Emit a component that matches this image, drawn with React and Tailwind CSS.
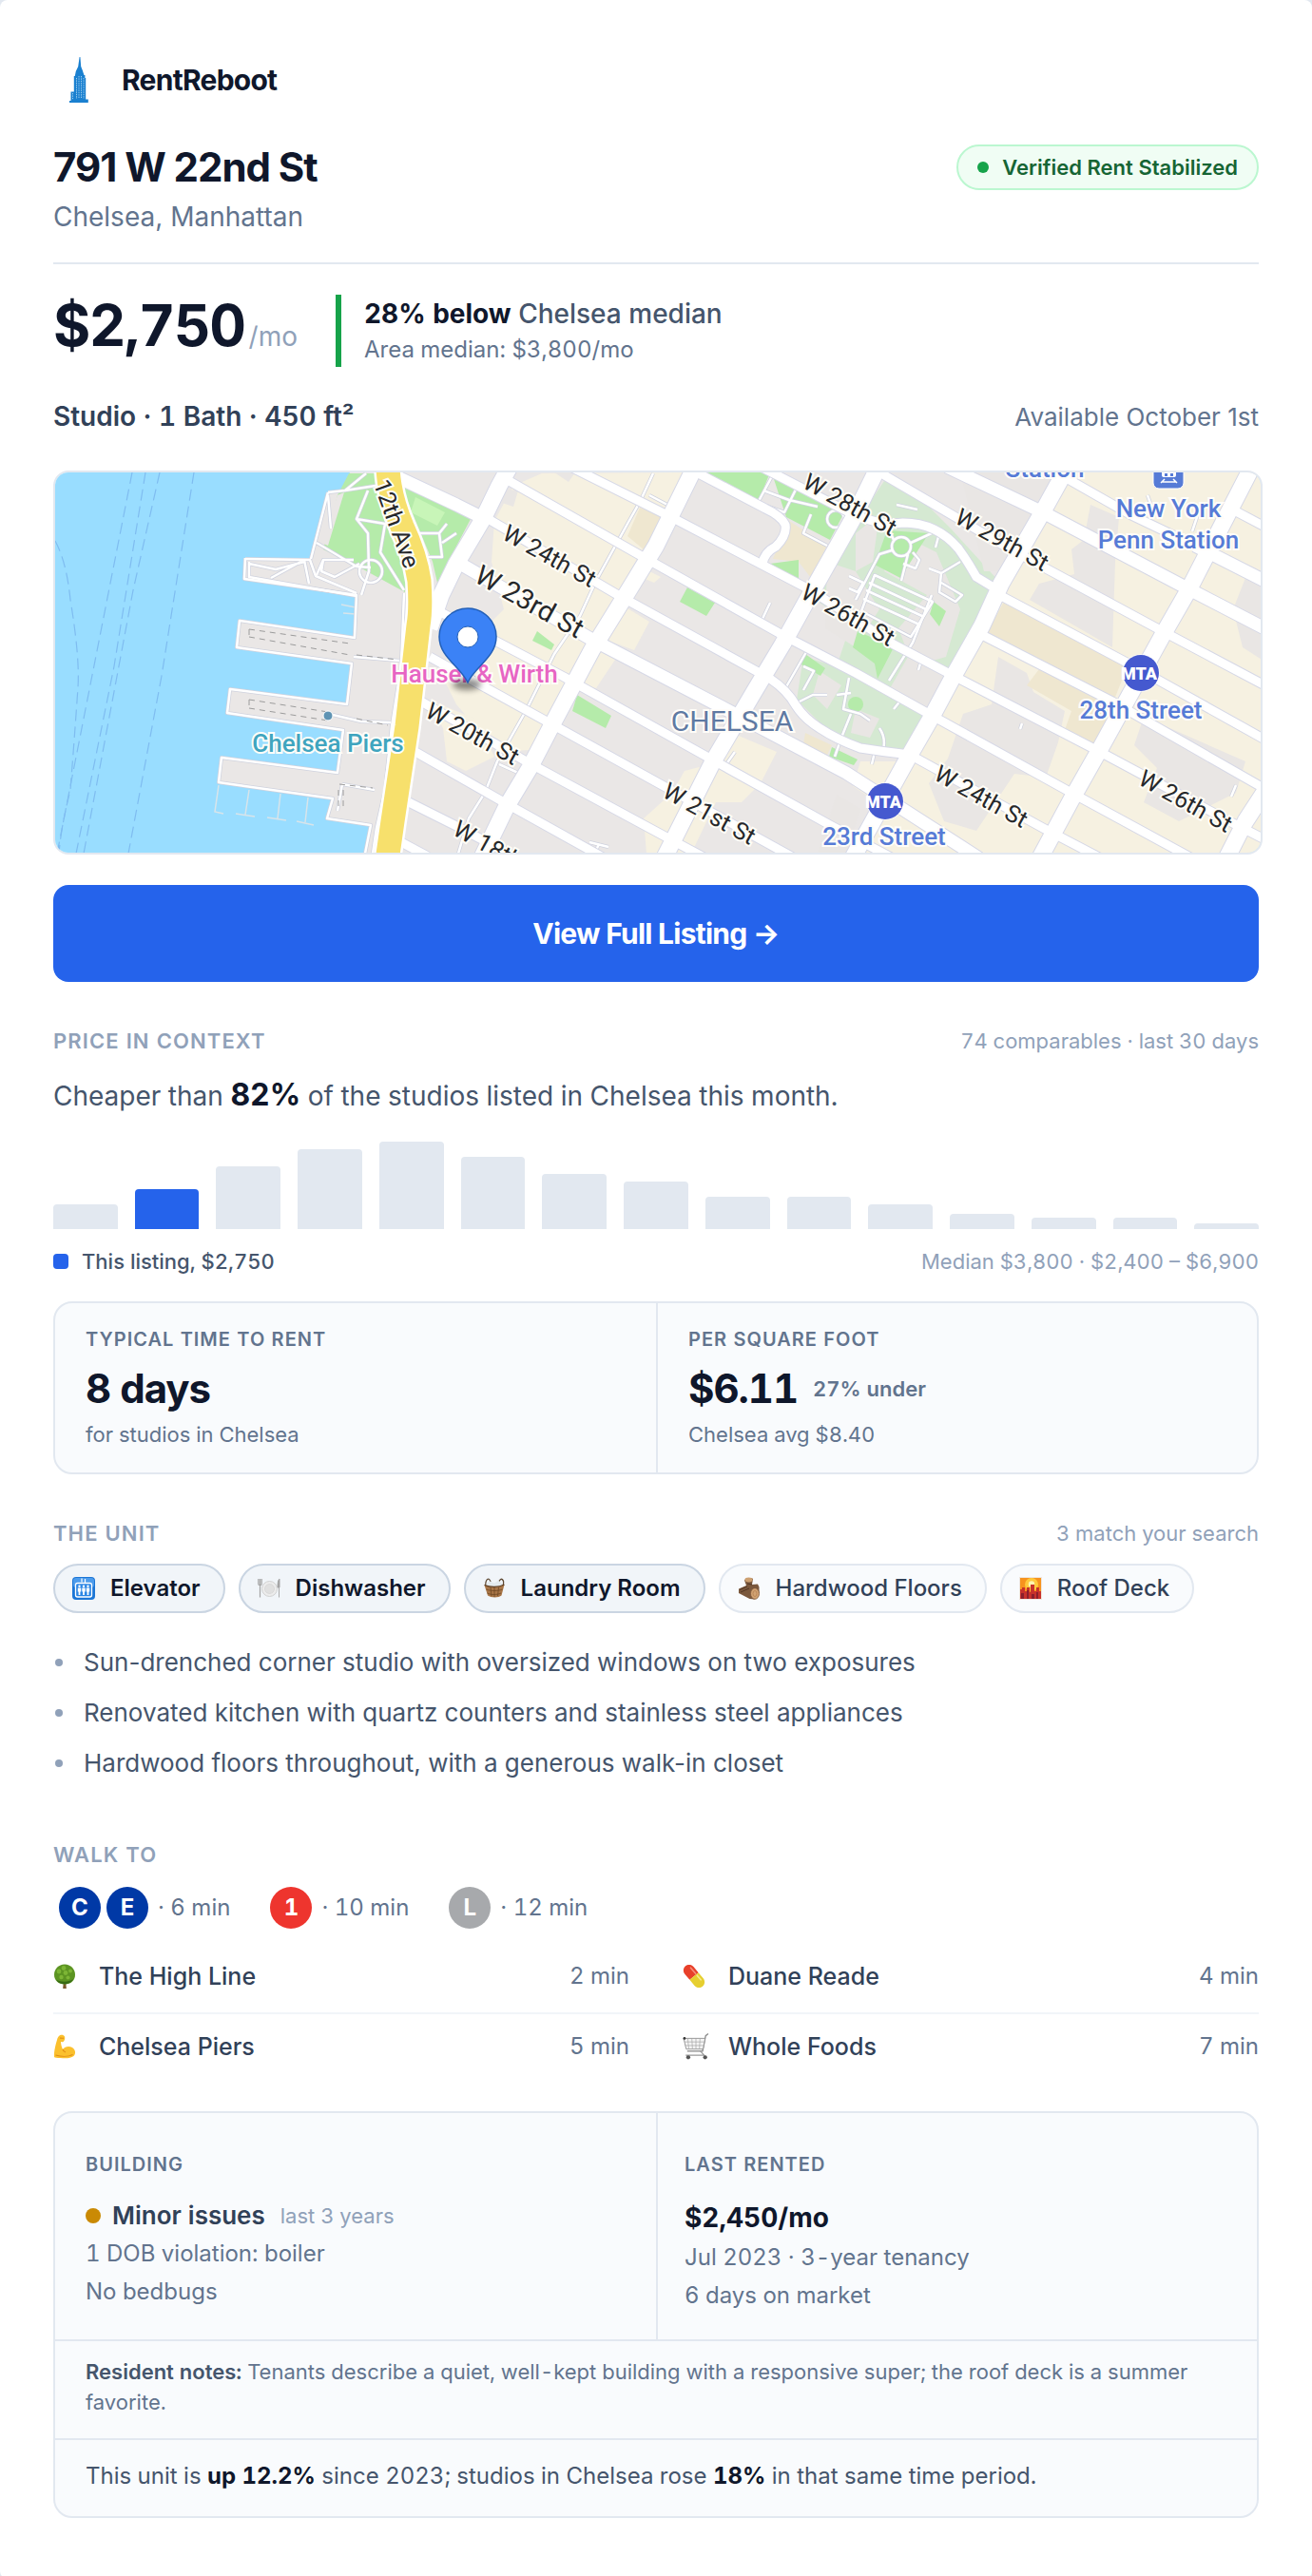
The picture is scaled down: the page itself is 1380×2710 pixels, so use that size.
import React from "react";

// Price histogram, bar heights in px
const bars = [26, 42, 66, 84, 92, 76, 58, 50, 34, 34, 26, 16, 12, 12, 6];
const listingBar = 1;

const amenities = [
    { label: "Elevator", icon: ElevatorIcon, match: true },
    { label: "Dishwasher", icon: PlateIcon, match: true },
    { label: "Laundry Room", icon: BasketIcon, match: true },
    { label: "Hardwood Floors", icon: WoodIcon, match: false },
    { label: "Roof Deck", icon: SunsetIcon, match: false },
];

const highlights = [
    "Sun-drenched corner studio with oversized windows on two exposures",
    "Renovated kitchen with quartz counters and stainless steel appliances",
    "Hardwood floors throughout, with a generous walk-in closet",
];

const trains = [
    { lines: ["C", "E"], color: "bg-[#0039a6]", time: "6 min" },
    { lines: ["1"], color: "bg-[#ee352e]", time: "10 min" },
    { lines: ["L"], color: "bg-[#a7a9ac]", time: "12 min" },
];

const placeRows = [
    [
        { name: "The High Line", time: "2 min", icon: TreeIcon },
        { name: "Duane Reade", time: "4 min", icon: PillIcon },
    ],
    [
        { name: "Chelsea Piers", time: "5 min", icon: ArmIcon },
        { name: "Whole Foods", time: "7 min", icon: CartIcon },
    ],
];

function LogoIcon() {
    return (
        <svg viewBox="0 0 56 56" className="size-14 shrink-0" aria-hidden="true">
            <path
                fill="#1a80d0"
                d="M27.6 4h.8l.8 10 1.6 4 1.6 5h1v3h.8v22.5h2.6V52H17v-2h1.500V40.500h3.300V24h1l1-5 2.400-5z"
            />
            <path
                stroke="#d4ecfb"
                strokeWidth="0.700"
                strokeDasharray="1.400 1"
                fill="none"
                d="M24.500 26v22M27 24v24M29.500 24v24M32 26v22M20.500 42v7"
            />
        </svg>
    );
}

function ElevatorIcon() {
    return (
        <svg viewBox="0 0 24 24" className="size-6 shrink-0" aria-hidden="true">
            <rect width="24" height="24" rx="4" fill="#1c76d6" />
            <rect x="1" y="1" width="22" height="10" rx="3" fill="#4d9cec" />
            <path d="M10 1.500v4M13.500 2v4" stroke="#fff" strokeWidth="1.200" />
            <rect x="3.500" y="6.500" width="17" height="14.500" rx="2" fill="#2c86e4" stroke="#fff" strokeWidth="1.300" />
            {[7.5, 12, 16.500].map((x) => (
                <g key={x} fill="#fff">
                    <circle cx={x} cy="9.800" r="1.200" />
                    <path d={`M${x - 1.700} 11.500h3.400v4h-.8v3.500h-1.800v-3.500h-.8z`} />
                </g>
            ))}
        </svg>
    );
}

function PlateIcon() {
    return (
        <svg viewBox="0 0 24 24" className="size-6 shrink-0" aria-hidden="true">
            <circle cx="12.500" cy="12.500" r="8" fill="#ececec" stroke="#c9c9c9" strokeWidth="0.800" />
            <circle cx="12.500" cy="12.500" r="5" fill="#e0e0e0" stroke="#d0d0d0" strokeWidth="0.600" />
            <path d="M.8 2v5.500c0 1.500 3.400 1.500 3.400 0V2M2.500 2v19.500" stroke="#a3a3a3" strokeWidth="1.200" fill="none" />
            <path d="M23 2c-1.500 1-2 4-2 9h2zM22.500 11v10.500" fill="#a3a3a3" stroke="#a3a3a3" strokeWidth="0.900" />
        </svg>
    );
}

function BasketIcon() {
    return (
        <svg viewBox="0 0 24 24" className="size-6 shrink-0" aria-hidden="true">
            <path d="M3 10C2 3 6-1 8 5M21 9c2-6-2-10-5-3" fill="none" stroke="#5f4a35" strokeWidth="1.300" />
            <path d="M3 8l4-3.500 5 2 4-3 5 4.500-9 5z" fill="#e3eaee" />
            <path d="M1.500 8.500c6 2.500 15 2.500 21-.5l-3 11.500c-3 2.600-11 2.600-14.500 0z" fill="#a87547" />
            <path d="M1.500 8.500c6 2.500 15 2.500 21-.5" fill="none" stroke="#5d3c20" strokeWidth="1.300" />
            <path d="M3.500 13c5 2 12 2 17 0M4.500 17c4 2 10 2 14.500 0M8 11l1 9M12 11v10M16.500 11l-1 9" fill="none" stroke="#6d4824" strokeWidth="0.800" />
        </svg>
    );
}

function WoodIcon() {
    return (
        <svg viewBox="0 0 24 24" className="size-6 shrink-0" aria-hidden="true">
            <path d="M7 3.500C8 1 14 0 16 2l-1 6 6-.5 1.500 3V17l-5 6.500-5-.5-11.500-6L1 12.500 9 9z" fill="#7a583d" />
            <ellipse cx="11.500" cy="3" rx="4" ry="2.400" fill="#cda071" />
            <path d="M2 13.500l8-3.500M3 16l9-4M10 7l5 1" stroke="#523725" strokeWidth="1" />
            <ellipse cx="18" cy="17.500" rx="4.500" ry="5.800" fill="#d2a373" stroke="#7c5638" strokeWidth="0.800" />
            <ellipse cx="18" cy="17.500" rx="2" ry="3" fill="none" stroke="#b27f50" strokeWidth="0.800" />
        </svg>
    );
}

function SunsetIcon() {
    return (
        <svg viewBox="0 0 24 24" className="size-6 shrink-0" aria-hidden="true">
            <rect x="0.500" y="0.500" width="23" height="23" fill="#f7931e" stroke="#efe6dd" />
            <circle cx="13" cy="8" r="7" fill="#ffc93c" />
            <circle cx="13" cy="7.500" r="3.200" fill="#fff4b0" />
            <path d="M1 13h2v-2h3v4h2v-4h3v5h1V8h4v7h2v-4h3v4h2v8H1z" fill="#c8322b" />
            <path d="M2 17h3v6H2zM8 14h2v9H8zM13 18h3v5h-3zM18 16h2v7h-2z" fill="#8a1f2c" />
        </svg>
    );
}

function TreeIcon() {
    return (
        <svg viewBox="0 0 24 26" className="h-7 w-6 shrink-0" aria-hidden="true">
            <path d="M10.800 18h2.400l.6 8h-3.600z" fill="#7a5a2e" />
            <path d="M12 .5c6.500 0 11 5 11 11S18.500 21.500 12 21.500 1 17.500 1 11.500 5.500.5 12 .5z" fill="#5c9422" />
            <g fill="#7cb535">
                <circle cx="11" cy="4.500" r="2.400" />
                <circle cx="6" cy="8" r="2.400" />
                <circle cx="13" cy="9.500" r="2.400" />
                <circle cx="18" cy="7.500" r="2" />
                <circle cx="8.500" cy="14" r="2.200" />
                <circle cx="15.500" cy="14.500" r="2" />
            </g>
            <path d="M3 16.500c5 3 13 3 18-.5-3 6.500-14 7.500-18 .5z" fill="#376b15" />
        </svg>
    );
}

function PillIcon() {
    return (
        <svg viewBox="0 0 24 24" className="size-6 shrink-0" aria-hidden="true">
            <g transform="rotate(50 12 12)">
                <path d="M4 6h8v12H4a6 6 0 0 1 0-12z" fill="#e8402a" />
                <path d="M12 6h8a6 6 0 0 1 0 12h-8z" fill="#e6cf30" />
                <path d="M3 9h8" stroke="#f68e7c" strokeWidth="1.600" strokeLinecap="round" />
                <path d="M13.500 9h6" stroke="#f7ec8e" strokeWidth="1.600" strokeLinecap="round" />
            </g>
        </svg>
    );
}

function ArmIcon() {
    return (
        <svg viewBox="0 0 24 26" className="h-7 w-6 shrink-0" aria-hidden="true">
            <path
                d="M6 2c1.500-1.800 5-1.600 6 .5.800 2-.2 4.500-1.500 5.500-1.500.5-2 0-2.500 0 .2 3 .8 5.500 2 8 2-3 6.500-4 10-2 3.500 2.200 4 6.500 1.500 9-3 2.600-9 2.500-14 2-3.500-.2-6 0-6.500-1C.5 18 3 9 4 6c.4-1.600 1-3 2-4z"
                fill="#fbc02d"
            />
            <path d="M10 16c.5 1.500 1.500 2.500 3 3M2.500 22c5 1.500 13 2 18-.5M7 4c1.500.2 3 .5 4 0" fill="none" stroke="#e08e16" strokeWidth="1.200" />
        </svg>
    );
}

function CartIcon() {
    return (
        <svg viewBox="0 0 26 26" className="size-7 shrink-0" aria-hidden="true">
            <path d="M25 .5l-2.500 2-3 15H4.500" fill="none" stroke="#888" strokeWidth="1.200" />
            <path d="M1 5h21l-2 10.500H3.500z" fill="#f4f4f4" stroke="#8b8b8b" strokeWidth="0.800" />
            <path d="M5 5l1 10M9 5l.6 10M13 5v10M17 5l-.6 10M2 8.500h19M2.500 12h18" stroke="#a0a0a0" strokeWidth="0.600" />
            <path d="M17 17l4 4.500H3" fill="none" stroke="#9b9b9b" strokeWidth="1.200" />
            <circle cx="5.500" cy="23.500" r="2" fill="#555" />
            <circle cx="22" cy="23.500" r="2" fill="#555" />
            <circle cx="1.800" cy="5" r="1.300" fill="#333" />
        </svg>
    );
}

// Street name set along the street grid
function StreetLabel({ x, y, angle = 29, size = 25, children }) {
    return (
        <text
            transform={`translate(${x} ${y}) rotate(${angle})`}
            textAnchor="middle"
            dominantBaseline="central"
            fontSize={size}
            fill="#26282b"
            stroke="#fffdf6"
            strokeWidth="4"
            paintOrder="stroke"
        >
            {children}
        </text>
    );
}

function PlaceLabel({ x, y, color, size = 26, weight = 500, children }) {
    return (
        <text x={x} y={y} textAnchor="middle" fontSize={size} fontWeight={weight} fill={color} stroke="#fffdf9" strokeWidth="4" paintOrder="stroke">
            {children}
        </text>
    );
}

function MtaMarker({ x, y }) {
    return (
        <g transform={`translate(${x} ${y})`}>
            <circle r="20" fill="#fff" opacity="0.600" />
            <circle r="19" fill="#4559cf" />
            <text y="7" x="-2" textAnchor="middle" fontSize="18" fontWeight="900" fill="#fff">
                MTA
            </text>
        </g>
    );
}

const avenues = [
    "M536 490 525 510 508 545 480 592 464 625 452 660",
    "M731 490 690 573 657 627 623 682 583 757 557 807 533 847 505 905",
    "M924 490 897 545 853 623 823 677 793 727 750 800 699 901",
    "M1123 490 1097 537 1053 613 1033 657 1003 710 980 753 957 793 895 905",
    "M1317 490 1250 620 1223 667 1157 787 1127 840 1092 905",
    "M1334 826 1310 863 1287 908",
];

const streets = [
    "M532 503 673 583 823 667 900 707 977 750 1127 833 1254 902",
    "M600 490 706 543 853 620 940 677 1003 710 1157 790 1293 863 1334 884",
    "M510 543 650 625 810 713Q828 725 837 741 846 755 862 765 880 777 905 786 930 790 957 793L1097 870 1160 903",
    "M725 492 805 534Q822 542 826 551 828 562 816 574 804 580 802 592",
    "M800 490 897 540Q925 552 950 549 985 549 1008 576 1018 590 1027 606L1050 620",
    "M915 490 1063 577 1217 660 1334 722",
    "M1055 627 1187 697 1334 779",
    "M1033 667 1170 737 1334 831",
    "M1104 492 1190 541 1257 573",
    "M1300 537 1334 555",
    "M452 637 593 711 747 797 873 867 945 905",
    "M452 690 577 759 700 827 836 902",
    "M443 737 557 802 707 883 748 905",
    "M437 790 530 843 645 907",
    "M430 843 480 868 560 910",
    "M422 885 450 900",
];

const wideStreets = [
    "M416 500 480 530 510 545",
    "M477 588 623 672 767 747 890 812 1030 902",
    "M996 490 1097 538 1247 617 1334 662",
    "M1257 573 1334 612",
];

const creamBlocks = [
    "540,510 570,497 722,496 647,627 607,707 573,787 523,790 480,740 460,700 503,667 530,640 517,590 520,547",
    "450,735 500,755 520,795 490,810 470,800 466,765",
    "650,633 683,653 667,683 640,673",
    "633,683 647,693 627,723 610,720",
    "683,600 695,606 688,612 678,608",
    "770,770 817,790 800,823 780,843 753,843 727,897 680,897 677,860 707,833 720,810 747,803",
    "1125,496 1327,496 1327,897 895,897 957,793 1003,710 1053,613 1075,570 1064,534",
    "905,800 950,800 925,845 897,826",
];

const greyBlocks = [
    "1010,496 1110,496 1064,600 1035,600",
    "1147,530 1177,543 1173,590 1170,680 1083,630 1093,613 1130,603 1127,577 1140,567",
    "1050,690 1080,707 1087,727 1120,747 1113,780 1100,817 1067,813 1027,873 993,863 977,823 997,797 1013,750 1043,740",
    "1203,753 1310,800 1300,833 1240,863 1203,843 1217,807 1193,783",
    "1310,607 1327,613 1327,693 1307,680 1297,640",
    "880,835 905,850 890,897 860,897",
    "525,513 545,515 540,532 528,528",
    "583,496 605,496 598,506",
];

const tanBlocks = [
    "673,533 697,543 677,577 660,563",
    "1057,630 1187,697 1153,783 1120,767 1127,747 1080,720 1093,703 1037,667",
    "830,547 870,573 853,607 840,590 813,587",
    "847,770 875,783 869,795 845,782",
];

const parkBlocks = [
    "930,505 960,515 1000,555 1053,613 1003,700 957,790 905,782 865,762 838,735 845,690 880,700 895,655 850,625",
];

const parkGaps = [
    "945,560 985,580 1010,640 995,690 960,700 945,660 975,625 930,600",
    "870,590 900,600 925,640 900,680 868,660",
    "900,560 925,540 918,590 900,600",
    "955,690 995,710 975,750 935,725",
    "862,705 885,720 870,745 855,730",
    "900,745 925,755 915,775 895,770",
];

const greenBlocks = [
    "367,497 400,497 418,555 430,590 426,622 373,593 340,577 355,520",
    "421,508 480,535 495,545 460,612 455,590",
    "737,496 810,496 797,528",
    "813,500 887,540 873,567 827,543",
    "810,592 840,588 840,608",
    "723,617 752,633 743,647 715,632",
    "607,730 643,752 637,765 602,747",
    "565,663 583,677 580,683 560,673",
    "847,687 868,702 863,710 843,698",
    "933,557 977,560 947,607 920,593",
    "902,663 940,680 923,713 920,697 897,680",
    "982,632 995,642 988,658 978,645",
    "875,785 902,798 898,804 872,795",
];

const footpaths = [
    "M363 515 395 510M345 517 363 515 385 497M345 517 327 587M333 570 375 595 390 596M387 515 375 545 387 560 388 600 380 625M375 545 405 550 400 580 425 620M345 520 348 555",
    "M258 587 326 588 332 605 375 623M262 590 262 606 375 626M285 607 320 588 325 613M262 592 290 598 320 590",
    "M340 588 372 588M333 604 340 588 338 600 352 606 378 592M378 600a12 12 0 1 0 24 0 12 12 0 1 0-24 0",
    "M440 560 462 560 470 550M462 560 465 585 450 585M465 570 480 560M500 645 492 655",
    "M687 497 673 527 660 550 627 610 610 647 583 687 553 747 523 800 510 833 493 860 482 897",
    "M683 520 702 530M773 790l-12 17 8 4M620 885 640 890M630 887 624 900M810 633 802 650M525 803 545 812",
    "M812 500 797 528 825 538 840 508M803 515 830 525 860 532M853 540 845 560 870 573M870 545a9 9 0 1 0 18 0 9 9 0 1 0-18 0",
    "M938 574a10 10 0 1 0 20 0 10 10 0 1 0-20 0M958 570 980 560M940 567 934 554M938 578 925 582 900 630M955 582 948 610M960 580 967 588 963 597 950 592",
    "M977 597 990 602 1010 590M990 602 988 622 1005 632 1012 625 990 612M980 625 960 675 935 715M988 560 984 575M893 605 908 612 902 622 893 618",
    "M920 604 981 632 958 669 906 642zM914 612 976 641M911 620 972 648M908 629 967 656M943 530 965 535",
    "M848 685 825 725 835 740M845 700 856 705 845 725M835 740 855 730 870 730M893 712 887 745 905 750 915 757M880 730 895 728M895 750 885 775 878 795",
    "M925 765Q932 775 929 788M920 790 917 803M1260 540l-6 18M1207 520l5 14M970 690l-4 14M940 745 948 735M1300 825 1295 837M1075 760 1073 766",
    "M258 586 257 608 375 625 373 670 252 652 249 680 370 697 365 740 242 724 239 749 361 767 355 812 233 796 230 822 350 839 344 860 390 867 384 897",
    "M425 623 422 700 412 763 405 830 396 870 392 897M360 824 394 830M360 824 355 852M350 751 380 758 411 759M372 690 420 694",
];

function NeighborhoodMap() {
    return (
        <svg
            viewBox="58 496 1268 400"
            className="block h-auto w-full font-[Roboto,sans-serif]"
            role="img"
            aria-label="Map of Chelsea around 791 W 22nd St"
        >
            <rect x="58" y="496" width="1268" height="400" fill="#99ddff" />

            {/* ferry routes */}
            <g fill="none" stroke="#7fbcf0" strokeWidth="1.200" strokeDasharray="12 6">
                <path d="M139 496 60 897" />
                <path d="M153 496 120 700 80 897" />
                <path d="M168 496 140 620 88 897" />
                <path d="M204 496 170 710 135 897" />
                <path d="M58 568Q70 590 74 630 84 690 82 722 78 780 74 830 64 870 62 897" />
            </g>

            {/* shore and piers */}
            <path
                d="M368 496 363 515 345 517 327 587 258 586 257 608 375 625 373 670 252 652 249 680 370 697 365 740 242 724 239 749 361 767 355 812 233 796 230 822 350 839 344 860 390 867 383 897H1327V496z"
                fill="#eae7e6"
            />
            <path
                d="M230 825 226 853 235 855M262 830 258 856M248 855 268 858M295 834 292 860M281 859 301 862M324 838 321 864M312 863 330 867M359 635 374 638M361 644 374 645"
                fill="none"
                stroke="#d8e4ea"
                strokeWidth="1.500"
            />

            <g fill="#f6f1e1">{creamBlocks.map((p) => <polygon key={p} points={p} />)}</g>
            <g fill="#d5e9d2">{parkBlocks.map((p) => <polygon key={p} points={p} />)}</g>
            <g fill="#e9e6e4">{[...greyBlocks, ...parkGaps].map((p) => <polygon key={p} points={p} />)}</g>
            <g fill="#efe7d0">{tanBlocks.map((p) => <polygon key={p} points={p} />)}</g>
            <g fill="#b5ebaa">{greenBlocks.map((p) => <polygon key={p} points={p} />)}</g>
            <circle cx="900" cy="740" r="8" fill="#b5ebaa" />
            <polygon points="437,522 468,538 460,552 432,538" fill="#c8f5b8" />
            <polygon points="355,520 362,517 345,573 338,570" fill="#eae7e6" />

            <g fill="none" strokeLinejoin="round">
                {footpaths.map((d) => <path key={d} d={d} stroke="#cfd2de" strokeWidth="4" />)}
                {footpaths.map((d) => <path key={d} d={d} stroke="#fff" strokeWidth="2.500" />)}
            </g>
            <g fill="none" stroke="#9c9c9c" strokeWidth="1" strokeDasharray="6 5">
                <path d="M262 661 368 676M262 669 368 688M262 661V671M262 735 345 748M262 744 345 757M262 735V744" />
                <path d="M375 688 418 693M375 755 408 762M357 824 392 828M356 830V852M361 830V852" />
            </g>

            {/* street grid: casing first, then the white road */}
            <g fill="none" strokeLinejoin="round">
                {streets.map((d) => <path key={d} d={d} stroke="#d6d8e6" strokeWidth="11" />)}
                {wideStreets.map((d) => <path key={d} d={d} stroke="#d6d8e6" strokeWidth="15" />)}
                {avenues.map((d) => <path key={d} d={d} stroke="#d6d8e6" strokeWidth="19" />)}
                {streets.map((d) => <path key={d} d={d} stroke="#fff" strokeWidth="9" />)}
                {wideStreets.map((d) => <path key={d} d={d} stroke="#fff" strokeWidth="13" />)}
                {avenues.map((d) => <path key={d} d={d} stroke="#fff" strokeWidth="17" />)}
            </g>

            {/* 12th Avenue */}
            <g fill="none">
                <path d="M408 490Q409 520 423 553 437 583 441 610 443 640 440 657L428 763 413 863 407 905" stroke="#fff" strokeWidth="30" />
                <path d="M408 490Q409 520 423 553 437 583 441 610 443 640 440 657L428 763 413 863 407 905" stroke="#f7e06c" strokeWidth="25" />
            </g>

            <StreetLabel x={417} y={550} angle={70}>12th Ave</StreetLabel>
            <StreetLabel x={578} y={584}>W 24th St</StreetLabel>
            <StreetLabel x={557} y={632} size={29}>W 23rd St</StreetLabel>
            <StreetLabel x={497} y={771}>W 20th St</StreetLabel>
            <StreetLabel x={526} y={895}>W 18th St</StreetLabel>
            <StreetLabel x={746} y={855}>W 21st St</StreetLabel>
            <StreetLabel x={894} y={530}>W 28th St</StreetLabel>
            <StreetLabel x={892} y={646}>W 26th St</StreetLabel>
            <StreetLabel x={1054} y={567}>W 29th St</StreetLabel>
            <StreetLabel x={1032} y={837}>W 24th St</StreetLabel>
            <StreetLabel x={1247} y={842}>W 26th St</StreetLabel>

            <PlaceLabel x={770} y={768} color="#5f7aa3" size={30} weight={400}>CHELSEA</PlaceLabel>
            <PlaceLabel x={345} y={790} color="#3fa5bf">Chelsea Piers</PlaceLabel>
            <PlaceLabel x={499} y={717} color="#e765c3">Hauser &amp; Wirth</PlaceLabel>
            <PlaceLabel x={1200} y={755} color="#567bd6">28th Street</PlaceLabel>
            <PlaceLabel x={930} y={888} color="#567bd6">23rd Street</PlaceLabel>
            <PlaceLabel x={1229} y={543} color="#567bd6">New York</PlaceLabel>
            <PlaceLabel x={1229} y={576} color="#567bd6">Penn Station</PlaceLabel>
            <PlaceLabel x={1099} y={501} color="#567bd6">Station</PlaceLabel>
            <circle cx="345" cy="752" r="5" fill="#5e93b3" stroke="#fff" strokeWidth="1" />

            <MtaMarker x={1200} y={707} />
            <MtaMarker x={931} y={842} />

            <g>
                <rect x="1213" y="480" width="32" height="33" rx="6" fill="#567bd6" stroke="#fff" />
                <rect x="1222" y="485" width="15" height="16" rx="2" fill="#fff" />
                <path d="M1225 500h3v-3h-3zM1231 500h3v-3h-3z" fill="#567bd6" />
                <path d="M1225 503 1221 507M1234 503 1238 507M1222 506H1237" stroke="#fff" strokeWidth="1.500" />
            </g>

            {/* listing pin */}
            <defs>
                <filter id="pinShadow" x="-50%" y="-100%" width="200%" height="300%">
                    <feGaussianBlur stdDeviation="3" />
                </filter>
            </defs>
            <ellipse cx="491" cy="719" rx="15" ry="6" fill="#000" opacity="0.450" filter="url(#pinShadow)" />
            <path
                d="M492 717C484 700 462 690 462 669a30 30 0 0 1 60 0c0 21-22 31-30 48z"
                fill="#3b82f6"
                stroke="#2360b8"
                strokeWidth="1.500"
            />
            <circle cx="492" cy="669" r="11" fill="#fff" stroke="#2360b8" strokeWidth="1" />
        </svg>
    );
}

function SectionHeader({ title, note }) {
    return (
        <div className="flex items-baseline justify-between text-[22px] leading-8 text-slate-400 tabular-nums">
            <h2 className="font-semibold tracking-wider uppercase">{title}</h2>
            {note && <span>{note}</span>}
        </div>
    );
}

function CardLabel({ children }) {
    return <h3 className="text-xl leading-7 font-semibold tracking-wider text-slate-500 uppercase">{children}</h3>;
}

export default function App() {
    return (
        <div className="bg-slate-200 font-[Inter,sans-serif]">
            <main className="rounded-lg bg-white px-14 pt-14 pb-16 text-slate-600">
                {/* Header */}
                <header className="border-b-2 border-slate-200 pb-[30px]">
                    <div className="flex items-center gap-4">
                        <LogoIcon />
                        <span className="text-[30px] leading-9 font-bold tracking-tight text-slate-900">RentReboot</span>
                    </div>
                    <div className="mt-10 flex items-start justify-between gap-6">
                        <div>
                            <h1 className="text-[42px] leading-12 font-bold tracking-tight text-slate-900">791 W 22nd St</h1>
                            <p className="mt-2.5 text-[28px] leading-9 text-slate-500">Chelsea, Manhattan</p>
                        </div>
                        <span className="flex h-12 items-center gap-3.5 rounded-full border-2 border-[#bbf7d0] bg-[#f0fdf4] px-5 text-[22px] font-semibold text-[#166534]">
                            <span className="size-3 rounded-full bg-[#16a34a]" />
                            Verified Rent Stabilized
                        </span>
                    </div>
                </header>

                {/* Price */}
                <section className="mt-8">
                    <div className="flex items-start gap-10 tabular-nums">
                        <p className="text-[28px] leading-16 text-slate-400">
                            <span className="text-[60px] font-bold tracking-tight text-slate-900">$2,750</span>
                            <span className="ml-1">/mo</span>
                        </p>
                        <div className="border-l-6 border-[#16a34a] pl-6">
                            <p className="text-[28px] leading-10 font-medium">
                                <strong className="font-bold text-slate-900">28% below</strong> Chelsea median
                            </p>
                            <p className="text-2xl leading-9 text-slate-500">Area median: $3,800/mo</p>
                        </div>
                    </div>
                    <div className="mt-8 flex items-baseline justify-between">
                        <p className="text-[28px] leading-10 font-semibold text-slate-700 tabular-nums">Studio · 1 Bath · 450 ft²</p>
                        <p className="text-[26px] leading-10 text-slate-500">Available October 1st</p>
                    </div>
                </section>

                <div className="mt-9 box-content w-full overflow-hidden rounded-2xl border-2 border-slate-200">
                    <NeighborhoodMap />
                </div>

                <a
                    href="#listing"
                    className="mt-8 block rounded-2xl bg-[#2563eb] py-[31px] text-center text-[30px] leading-10 font-bold tracking-tight text-white hover:bg-[#1d4ed8]"
                >
                    View Full Listing →
                </a>

                {/* Price in context */}
                <section className="mt-[46px] tabular-nums">
                    <SectionHeader title="Price in context" note="74 comparables · last 30 days" />
                    <p className="mt-[22px] text-[28px] leading-10">
                        Cheaper than <strong className="text-[32px] leading-none font-bold text-slate-900">82%</strong> of the studios listed in
                        Chelsea this month.
                    </p>
                    <div className="mt-7 flex h-[92px] items-end gap-[18px]">
                        {bars.map((height, i) => (
                            <div
                                key={i}
                                className={`flex-1 rounded-t ${i === listingBar ? "bg-[#2563eb]" : "bg-slate-200"}`}
                                style={{ height }}
                            />
                        ))}
                    </div>
                    <div className="mt-[18px] flex items-center justify-between text-[22px] leading-8">
                        <span className="flex items-center gap-3.5 font-medium">
                            <span className="size-4 rounded bg-[#2563eb]" />
                            This listing, $2,750
                        </span>
                        <span className="text-slate-400">Median $3,800 · $2,400 – $6,900</span>
                    </div>
                    <div className="mt-[26px] grid grid-cols-2 rounded-[20px] border-2 border-slate-200 bg-[#f9fbfd]">
                        <div className="px-8 py-6">
                            <CardLabel>Typical time to rent</CardLabel>
                            <p className="mt-3.5 text-[42px] leading-12 font-bold tracking-tight text-slate-900">8 days</p>
                            <p className="mt-2 text-[22px] leading-8 text-slate-500">for studios in Chelsea</p>
                        </div>
                        <div className="border-l-2 border-slate-200 px-8 py-6">
                            <CardLabel>Per square foot</CardLabel>
                            <p className="mt-3.5 flex items-center gap-4 text-[42px] leading-12 font-bold tracking-tight text-slate-900">
                                $6.11
                                <span className="text-[22px] font-semibold tracking-normal text-slate-500">27% under</span>
                            </p>
                            <p className="mt-2 text-[22px] leading-8 text-slate-500">Chelsea avg $8.40</p>
                        </div>
                    </div>
                </section>

                {/* The unit */}
                <section className="mt-[46px]">
                    <SectionHeader title="The unit" note="3 match your search" />
                    <ul className="mt-4 flex flex-wrap gap-3.5">
                        {amenities.map((item) => (
                            <li
                                key={item.label}
                                className={`flex items-center gap-4 rounded-full border-2 py-1.5 pr-6 pl-[18px] text-2xl leading-9 ${
                                    item.match
                                        ? "border-slate-300 bg-slate-100 font-semibold text-slate-900"
                                        : "border-slate-200 bg-[#f9fbfd] font-medium text-slate-700"
                                }`}
                            >
                                <item.icon />
                                {item.label}
                            </li>
                        ))}
                    </ul>
                    <ul className="mt-8 space-y-[13px] text-[26px] leading-10">
                        {highlights.map((text) => (
                            <li key={text} className="flex items-center gap-[22px]">
                                <span className="ml-0.5 size-2 shrink-0 rounded-full bg-slate-400" />
                                {text}
                            </li>
                        ))}
                    </ul>
                </section>

                {/* Walk to */}
                <section className="mt-15 tabular-nums">
                    <SectionHeader title="Walk to" />
                    <ul className="mt-[18px] flex gap-[42px] pl-1.5 text-2xl text-slate-500">
                        {trains.map((train) => (
                            <li key={train.time} className="flex items-center gap-1.5">
                                {train.lines.map((line) => (
                                    <span
                                        key={line}
                                        className={`flex size-11 items-center justify-center rounded-full font-bold text-white ${train.color}`}
                                    >
                                        {line}
                                    </span>
                                ))}
                                <span className="ml-1">· {train.time}</span>
                            </li>
                        ))}
                    </ul>
                    <div className="mt-4 divide-y-2 divide-slate-100">
                        {placeRows.map((row) => (
                            <ul key={row[0].name} className="grid grid-cols-2 gap-14 pt-3.5 pb-[18px] leading-10">
                                {row.map((place) => (
                                    <li key={place.name} className="flex items-center justify-between">
                                        <span className="flex items-center text-[25px] leading-10 font-medium text-slate-700">
                                            <span className="flex w-12 items-center">
                                                <place.icon />
                                            </span>
                                            {place.name}
                                        </span>
                                        <span className="text-2xl leading-10 text-slate-500">{place.time}</span>
                                    </li>
                                ))}
                            </ul>
                        ))}
                    </div>
                </section>

                {/* Building */}
                <section className="mt-[30px] divide-y-2 divide-slate-200 rounded-[20px] border-2 border-slate-200 bg-[#f9fbfd] tabular-nums">
                    <div className="grid grid-cols-2 text-2xl leading-10 text-slate-500">
                        <div className="px-8 pt-10 pb-[26px]">
                            <CardLabel>Building</CardLabel>
                            <p className="mt-5 flex items-center text-[26px] leading-10 font-semibold text-slate-700">
                                <span className="mr-3 size-4 rounded-full bg-[#ca8a04]" />
                                Minor issues
                                <span className="ml-4 text-[22px] font-normal text-slate-400">last 3 years</span>
                            </p>
                            <p>1 DOB violation: boiler</p>
                            <p>No bedbugs</p>
                        </div>
                        <div className="border-l-2 border-slate-200 px-7 pt-10 pb-[26px]">
                            <CardLabel>Last rented</CardLabel>
                            <p className="mt-5 text-[28px] leading-11 font-bold text-slate-900">$2,450/mo</p>
                            <p>Jul 2023 · 3-year tenancy</p>
                            <p>6 days on market</p>
                        </div>
                    </div>
                    <p className="px-8 pt-4 pb-[22px] text-[22px] leading-8 text-slate-500">
                        <strong className="font-semibold text-slate-600">Resident notes:</strong> Tenants describe a quiet, well-kept building
                        with a responsive super; the roof deck is a summer favorite.
                    </p>
                    <p className="px-8 pt-5 pb-6 text-2xl leading-9">
                        This unit is <strong className="font-bold text-slate-900">up 12.2%</strong> since 2023; studios in Chelsea rose{" "}
                        <strong className="font-bold text-slate-900">18%</strong> in that same time period.
                    </p>
                </section>
            </main>
        </div>
    );
}
